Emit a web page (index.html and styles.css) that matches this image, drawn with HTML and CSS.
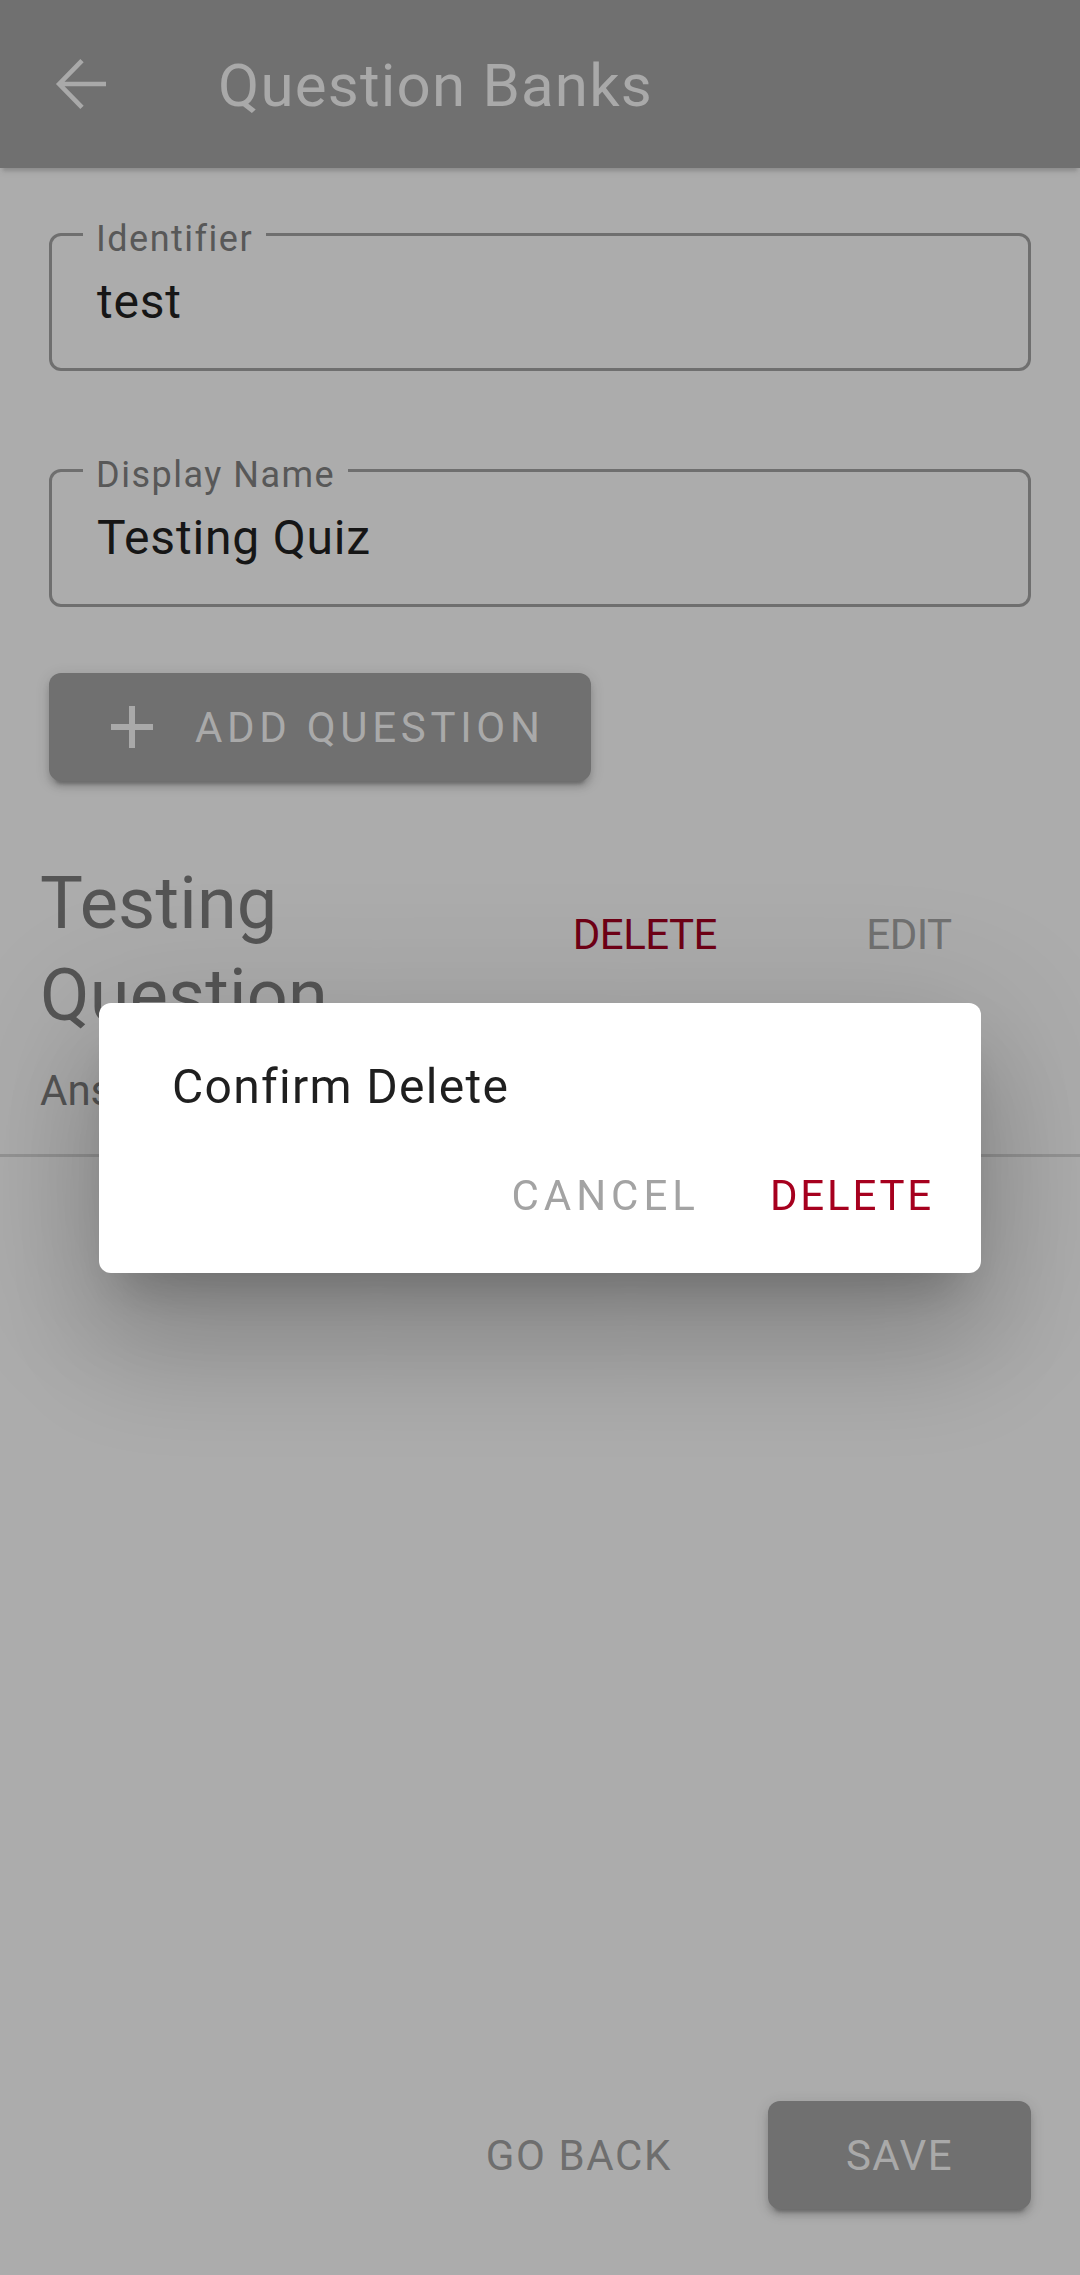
FILE: index.html
```html
<!DOCTYPE html>
<html lang="en">
<head>
<meta charset="utf-8">
<title>Question Banks</title>
<link rel="stylesheet" href="styles.css">
</head>
<body>
<div class="app">
  <header class="appbar">
    <svg class="nav-icon" viewBox="0 0 24 24" aria-hidden="true">
      <path d="M20 12H4.6M12 4.2L4.4 12l7.6 7.8" fill="none" stroke="#a9a9a9" stroke-width="1.55" stroke-linecap="butt" stroke-linejoin="miter"/>
    </svg>
    <h1 class="appbar-title">Question Banks</h1>
  </header>

  <main class="form">
    <div class="field field-first">
      <span class="field-label">Identifier</span>
      <span class="field-value">test</span>
    </div>
    <div class="field field-second">
      <span class="field-label">Display Name</span>
      <span class="field-value">Testing Quiz</span>
    </div>
    <button class="btn-contained btn-add">
      <svg class="add-icon" viewBox="0 0 24 24" aria-hidden="true">
        <path d="M19 13h-6v6h-2v-6H5v-2h6V5h2v6h6v2z" fill="#a9a9a9"/>
      </svg>
      <span class="btn-add-text">ADD QUESTION</span>
    </button>
  </main>

  <section class="question">
    <div class="question-row">
      <h2 class="question-title">Testing Question</h2>
      <div class="question-actions">
        <button class="btn-text btn-danger-dim">DELETE</button>
        <button class="btn-text btn-edit">EDIT</button>
      </div>
    </div>
    <p class="question-answers">Answer: 1</p>
  </section>
  <div class="divider"></div>

  <footer class="footer">
    <button class="btn-text btn-back">GO BACK</button>
    <button class="btn-contained btn-save">SAVE</button>
  </footer>
</div>

<div class="overlay">
  <div class="dialog" role="dialog">
    <h3 class="dialog-title">Confirm Delete</h3>
    <div class="dialog-actions">
      <button class="btn-text dialog-cancel">CANCEL</button>
      <button class="btn-text dialog-delete">DELETE</button>
    </div>
  </div>
</div>
</body>
</html>
```

FILE: styles.css
```css
* { box-sizing: border-box; }

html, body {
  margin: 0;
  padding: 0;
}

body {
  background: #acacac;
  font-family: Roboto, "Noto Sans", Arial, sans-serif;
  width: 1080px;
  height: 2275px;
  overflow: hidden;
}

button {
  font-family: inherit;
  border: none;
  background: none;
  padding: 0;
  margin: 0;
  cursor: pointer;
}

.app {
  min-height: 2275px;
  display: flex;
  flex-direction: column;
}

/* App bar */
.appbar {
  height: 168px;
  background: #707070;
  display: flex;
  align-items: center;
  box-shadow: 0 6px 3px -3px rgba(0,0,0,0.12), 0 3px 8px 0 rgba(0,0,0,0.08);
  position: relative;
  z-index: 1;
  flex-shrink: 0;
}

.nav-icon {
  width: 72px;
  height: 72px;
  margin-left: 46px;
  flex-shrink: 0;
}

.appbar-title {
  margin: 3px 0 0 100px;
  font-size: 60px;
  font-weight: 400;
  line-height: 70px;
  color: #a9a9a9;
  letter-spacing: 1.2px;
}

/* Form */
.form {
  padding: 0 49px;
  display: flex;
  flex-direction: column;
  align-items: stretch;
}

.field {
  position: relative;
  height: 138px;
  border: 3px solid #6f6f6f;
  border-radius: 12px;
  display: flex;
  align-items: center;
  padding-left: 45px;
}

.field-first { margin-top: 65px; }
.field-second { margin-top: 98px; }

.field-label {
  position: absolute;
  top: -15px;
  left: 31px;
  padding: 0 13px;
  background: #acacac;
  font-size: 36px;
  line-height: 36px;
  color: #585858;
  letter-spacing: 1.5px;
}

.field-value {
  font-size: 48px;
  line-height: 64px;
  color: #161616;
  letter-spacing: 0.8px;
}

.btn-contained {
  background: #707070;
  border-radius: 12px;
  height: 108px;
  color: #a9a9a9;
  font-size: 42px;
  box-shadow: 0 9px 3px -6px rgba(0,0,0,0.2), 0 6px 6px 0 rgba(0,0,0,0.14), 0 3px 15px 0 rgba(0,0,0,0.12);
}

.btn-add {
  margin-top: 66px;
  align-self: flex-start;
  display: flex;
  align-items: center;
  width: 542px;
  padding: 0;
}

.add-icon {
  width: 72px;
  height: 72px;
  margin-left: 47px;
  flex-shrink: 0;
}

.btn-add-text {
  margin-left: 27px;
  letter-spacing: 4.7px;
  line-height: 56px;
  margin-top: 2px;
  white-space: nowrap;
}

/* Question */
.question {
  padding: 0 40px;
  margin-top: 77px;
}

.question-row {
  display: flex;
  align-items: flex-start;
}

.question-title {
  flex: 1;
  margin: 0;
  font-size: 72px;
  line-height: 92px;
  font-weight: 400;
  color: #555555;
  letter-spacing: 0.2px;
}

.question-actions {
  display: flex;
  gap: 72px;
  margin-top: 22px;
  margin-right: 35px;
}

.btn-text {
  min-width: 192px;
  height: 108px;
  font-size: 42px;
  text-align: center;
  padding: 0 24px;
}

.btn-danger-dim {
  color: #6f0016;
  letter-spacing: -0.5px;
}

.btn-edit {
  color: #717171;
  letter-spacing: -0.5px;
}

.question-answers {
  margin: 21px 0 0;
  font-size: 42px;
  line-height: 56px;
  color: #555555;
}

.divider {
  height: 3px;
  background: #939393;
  margin-top: 35px;
}

/* Footer */
.footer {
  margin-top: auto;
  display: flex;
  justify-content: flex-end;
  align-items: center;
  gap: 72px;
  padding: 0 49px 66px;
}

.btn-back {
  color: #6e6e6e;
  letter-spacing: 1.6px;
}

.btn-save {
  width: 263px;
  letter-spacing: 1.5px;
}

/* Dialog */
.overlay {
  position: fixed;
  inset: 0;
  display: flex;
  align-items: center;
  justify-content: center;
  z-index: 10;
}

.dialog {
  width: 882px;
  height: 270px;
  background: #ffffff;
  border-radius: 12px;
  padding: 52px 0 0 73px;
  box-shadow: 0 33px 45px -21px rgba(0,0,0,0.2), 0 72px 114px 9px rgba(0,0,0,0.14), 0 27px 138px 24px rgba(0,0,0,0.12);
}

.dialog-title {
  margin: 0;
  font-size: 48px;
  line-height: 64px;
  font-weight: 400;
  color: #1f1f1f;
  letter-spacing: 1.3px;
}

.dialog-actions {
  display: flex;
  justify-content: flex-end;
  gap: 22px;
  margin-top: 23px;
  padding-right: 23px;
}

.dialog-actions .btn-text {
  min-width: 0;
}

.dialog-cancel {
  color: #a3a3a3;
  letter-spacing: 5px;
}

.dialog-delete {
  color: #a6001e;
  letter-spacing: 2.8px;
}
```
